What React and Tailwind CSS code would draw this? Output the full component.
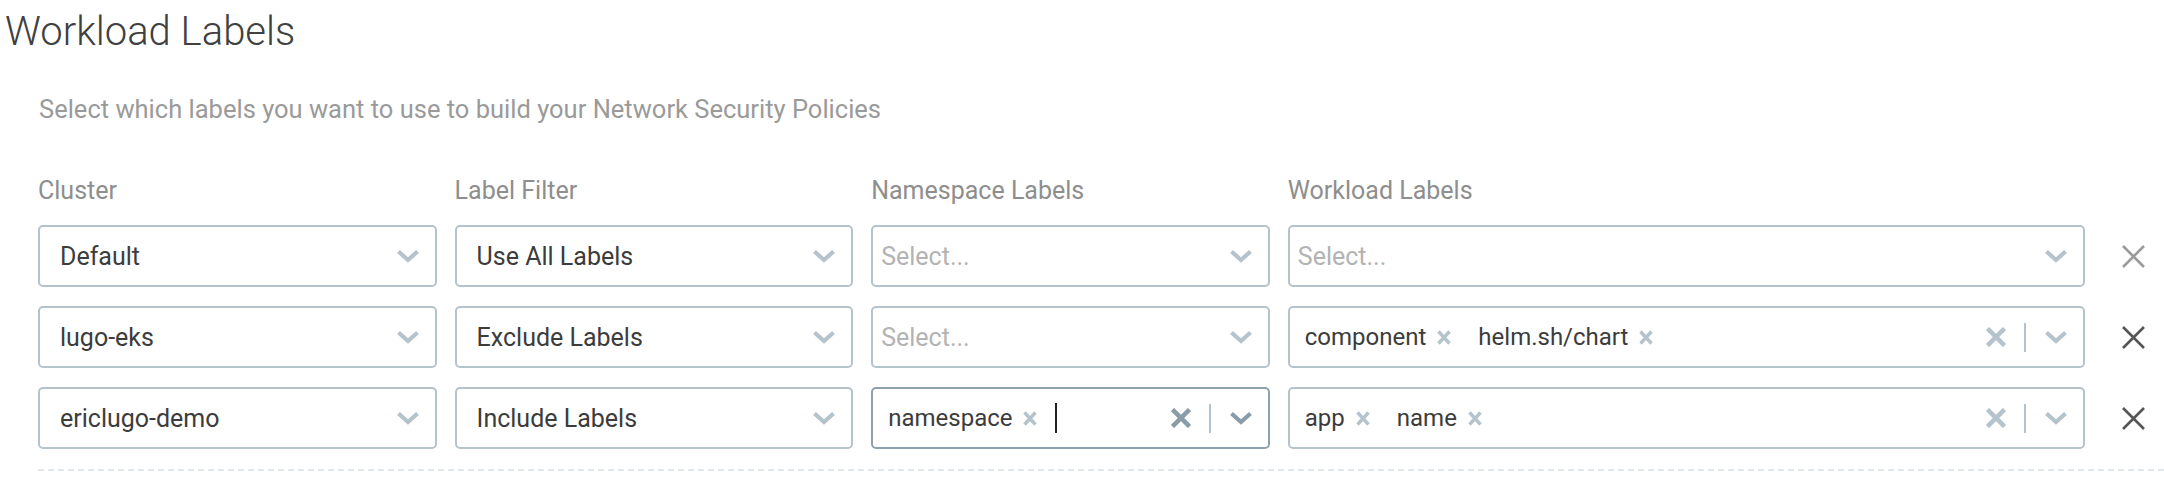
import React from "react";

const Chevron = ({ dark }) => (
  <svg width="24" height="14" viewBox="0 0 24 14" className="block shrink-0">
    <path d="M2.5 2.5 L12 11 L21.5 2.5" fill="none" stroke={dark ? "#8a9ca8" : "#b4c3cc"} strokeWidth="4.2" strokeLinejoin="miter" />
  </svg>
);

const BoldX = ({ dark }) => (
  <svg width="20" height="20" viewBox="0 0 20 20" className="block shrink-0">
    <path d="M1.5 1.5 L18.5 18.5 M18.5 1.5 L1.5 18.5" fill="none" stroke={dark ? "#8a9ca8" : "#b4c3cc"} strokeWidth="4.5" />
  </svg>
);

const TagX = () => (
  <svg width="14" height="15" viewBox="0 0 14 15" className="block shrink-0">
    <path d="M1.5 1.5 L12.5 13.5 M12.5 1.5 L1.5 13.5" fill="none" stroke="#b4c3cc" strokeWidth="3.4" />
  </svg>
);

const RemoveX = ({ light }) => (
  <svg width="23" height="23" viewBox="0 0 23 23" className="block">
    <path d="M1 1 L22 22 M22 1 L1 22" fill="none" stroke={light ? "#9a9a9a" : "#555555"} strokeWidth="2.6" />
  </svg>
);

const SimpleSelect = ({ value }) => (
  <div className="min-w-0 h-[62px] border-2 border-[#b4c3cc] rounded-[5px] flex items-center pl-[20px] pr-[15px]">
    <span className="flex-1 text-[25px] text-[#3c3c3c] leading-none whitespace-nowrap">{value}</span>
    <Chevron />
  </div>
);

const Placeholder = () => (
  <div className="min-w-0 h-[62px] border-2 border-[#b4c3cc] rounded-[5px] flex items-center pl-[8px] pr-[15px]">
    <span className="flex-1 text-[25px] text-[#b3b3b3] leading-none">Select...</span>
    <Chevron />
  </div>
);

const Tag = ({ text }) => (
  <div className="flex items-center gap-[11px] mr-[27px] shrink-0">
    <span className="text-[24px] text-[#3c3c3c] leading-none whitespace-nowrap">{text}</span>
    <TagX />
  </div>
);

const Multi = ({ tags, focused = false, cursor = false }) => (
  <div
    className={`min-w-0 h-[62px] border-2 rounded-[5px] flex items-center pl-[15px] pr-[15px] ${
      focused ? "border-[#8fa1ad]" : "border-[#b4c3cc]"
    }`}
  >
    <div className="flex-1 min-w-0 flex items-center">
      {tags.map((t) => (
        <Tag key={t} text={t} />
      ))}
      {cursor && <div className="w-[2px] h-[30px] bg-[#222] -ml-[9px]" />}
    </div>
    <BoldX dark={focused} />
    <div className="w-[2px] h-[29px] mx-[18px] bg-[#b4c3cc] shrink-0" />
    <Chevron dark={focused} />
  </div>
);

const Remove = ({ light }) => (
  <div className="flex justify-center items-center">
    <RemoveX light={light} />
  </div>
);

export default function App() {
  return (
    <div className="w-[2164px] h-[480px] bg-white overflow-hidden font-['Roboto',sans-serif]">
      <div className="pt-[9px] pl-[5px] text-[40px] leading-[45px] font-light text-[#404040]">Workload Labels</div>
      <div className="pl-[38px]">
        <div className="mt-[40px] pl-[1px] text-[25.5px] leading-[30px] text-[#9a9a9a]">
          Select which labels you want to use to build your Network Security Policies
        </div>
        <div className="mt-[52px] grid grid-cols-[minmax(0,1fr)_minmax(0,1fr)_minmax(0,1fr)_minmax(0,2fr)_61px] gap-x-[18px] gap-y-[19px] items-center">
          <div className="text-[25px] leading-[30px] text-[#8e8e8e]">Cluster</div>
          <div className="text-[25px] leading-[30px] text-[#8e8e8e]">Label Filter</div>
          <div className="text-[25px] leading-[30px] text-[#8e8e8e]">Namespace Labels</div>
          <div className="text-[25px] leading-[30px] text-[#8e8e8e]">Workload Labels</div>
          <div />

          <SimpleSelect value="Default" />
          <SimpleSelect value="Use All Labels" />
          <Placeholder />
          <Placeholder />
          <Remove light />

          <SimpleSelect value="lugo-eks" />
          <SimpleSelect value="Exclude Labels" />
          <Placeholder />
          <Multi tags={["component", "helm.sh/chart"]} />
          <Remove />

          <SimpleSelect value="ericlugo-demo" />
          <SimpleSelect value="Include Labels" />
          <Multi tags={["namespace"]} focused cursor />
          <Multi tags={["app", "name"]} />
          <Remove />
        </div>
        <div className="mt-[20px] border-t-2 border-dashed border-[#e1e6ea]" />
      </div>
    </div>
  );
}
